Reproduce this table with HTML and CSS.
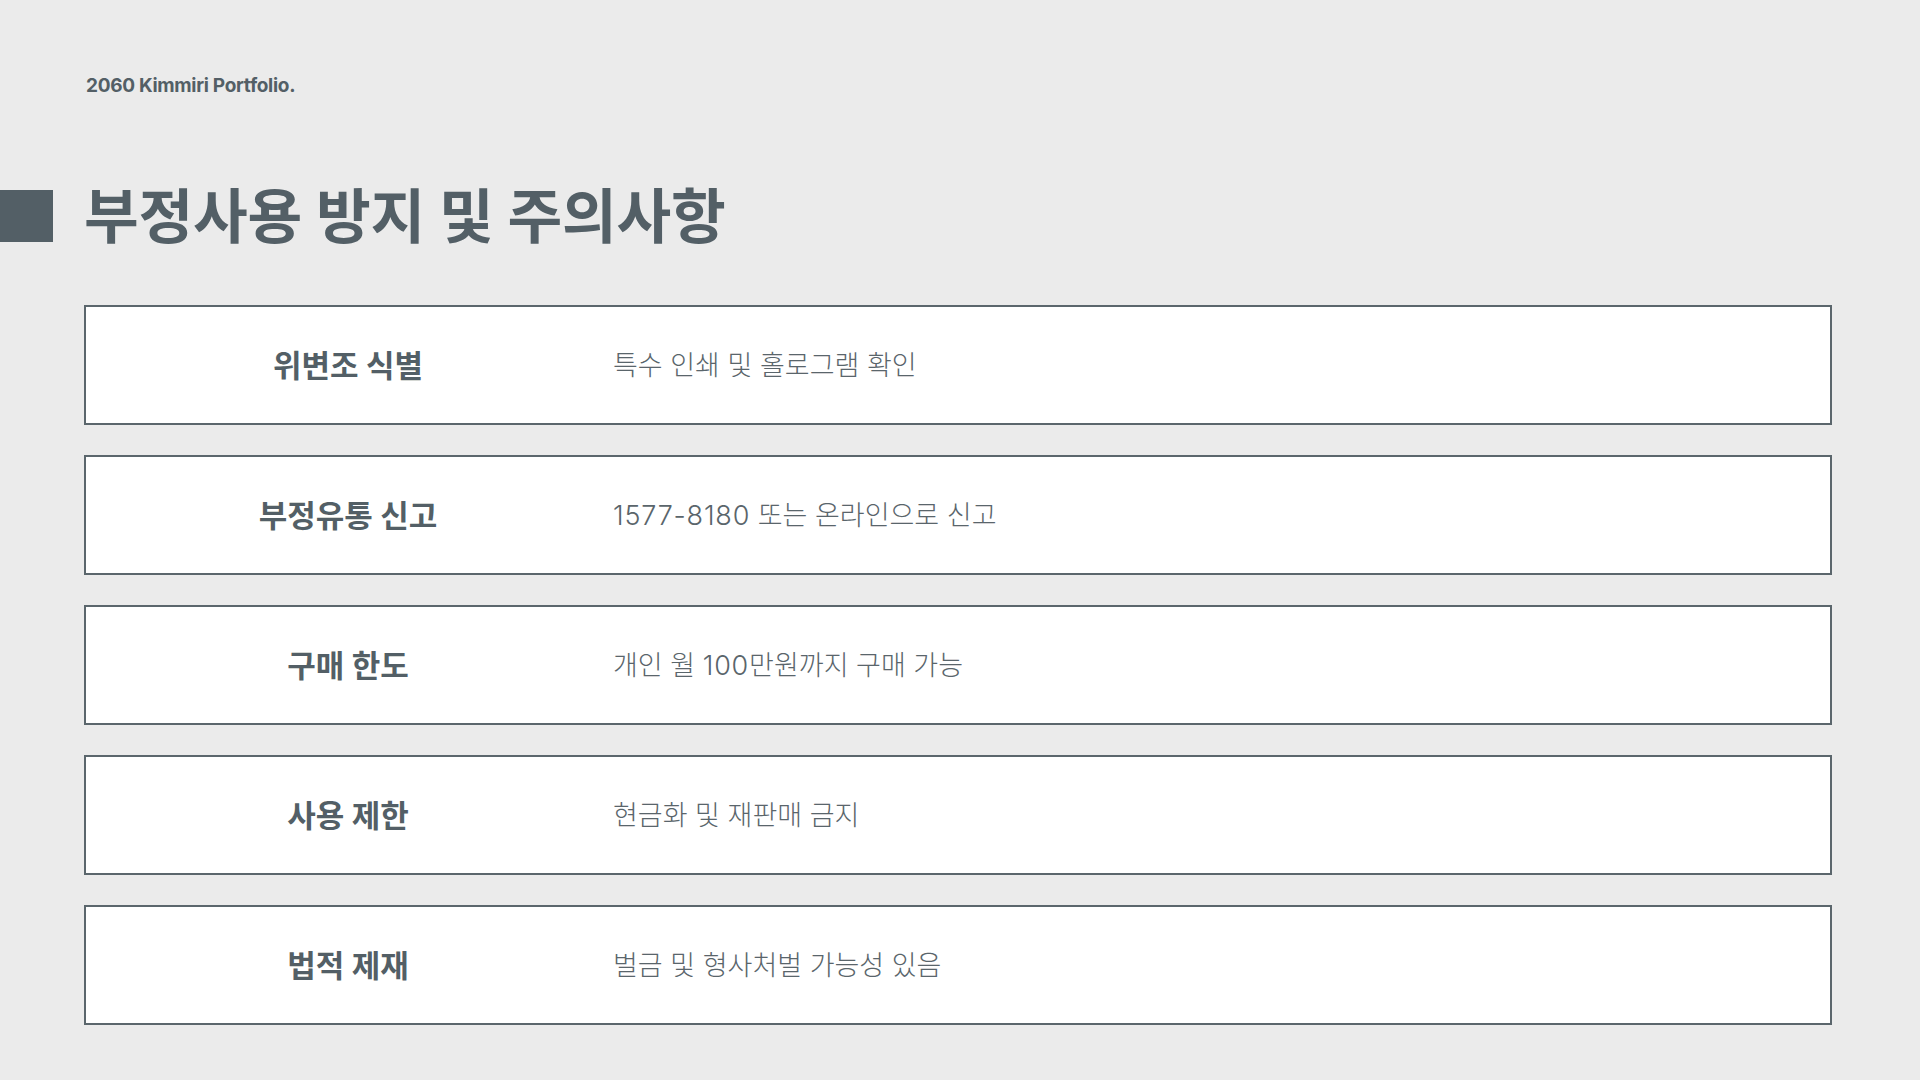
FILE: index.html
```html
<!DOCTYPE html>
<html lang="ko">
<head>
<meta charset="utf-8">
<title>부정사용 방지 및 주의사항</title>
<link rel="stylesheet" href="styles.css">
</head>
<body>
<div class="page">
  <header class="brand">2060 Kimmiri Portfolio.</header>
  <div class="title-row">
    <span class="title-mark"></span>
    <h1 class="title">부정사용 방지 및 주의사항</h1>
  </div>
  <div class="list">
    <div class="item"><div class="label">위변조 식별</div><div class="desc">특수 인쇄 및 홀로그램 확인</div></div>
    <div class="item"><div class="label">부정유통 신고</div><div class="desc"><span class="num">1577-8180</span> 또는 온라인으로 신고</div></div>
    <div class="item"><div class="label">구매 한도</div><div class="desc">개인 월 <span class="num">100</span>만원까지 구매 가능</div></div>
    <div class="item"><div class="label">사용 제한</div><div class="desc">현금화 및 재판매 금지</div></div>
    <div class="item"><div class="label">법적 제재</div><div class="desc">벌금 및 형사처벌 가능성 있음</div></div>
  </div>
</div>
</body>
</html>
```

FILE: styles.css
```css
html, body {
  margin: 0;
  padding: 0;
  background: #ebebeb;
}
body {
  font-family: Inter, "Noto Sans CJK KR", sans-serif;
  color: #535f66;
}
.page {
  width: 1920px;
  height: 1080px;
  box-sizing: border-box;
  padding: 73px 0 0 0;
}
.brand {
  margin-left: 86px;
  font-size: 19px;
  font-weight: 700;
  line-height: 26px;
  letter-spacing: -0.3px;
  color: #535f66;
}
.title-row {
  display: flex;
  align-items: center;
  gap: 31px;
  margin-top: 82px;
}
.title-mark {
  width: 53px;
  height: 52px;
  background: #535f66;
  flex: none;
}
.title {
  margin: 0;
  font-size: 59.5px;
  font-weight: 700;
  line-height: 70px;
  letter-spacing: -0.2px;
  color: #535f66;
}
.list {
  margin: 54px 0 0 84px;
  width: 1748px;
  display: flex;
  flex-direction: column;
  gap: 30px;
}
.item {
  height: 120px;
  box-sizing: border-box;
  border: 2px solid #5b666c;
  background: #ffffff;
  display: grid;
  grid-template-columns: 524px 1fr;
  align-items: center;
}
.label {
  text-align: center;
  font-size: 31px;
  font-weight: 700;
  color: #535f66;
  padding-bottom: 4px;
}
.desc {
  padding-left: 3px;
  padding-bottom: 4px;
  font-size: 27px;
  font-weight: 300;
  color: #5a656b;
}
.num {
  letter-spacing: 0.8px;
}
```
